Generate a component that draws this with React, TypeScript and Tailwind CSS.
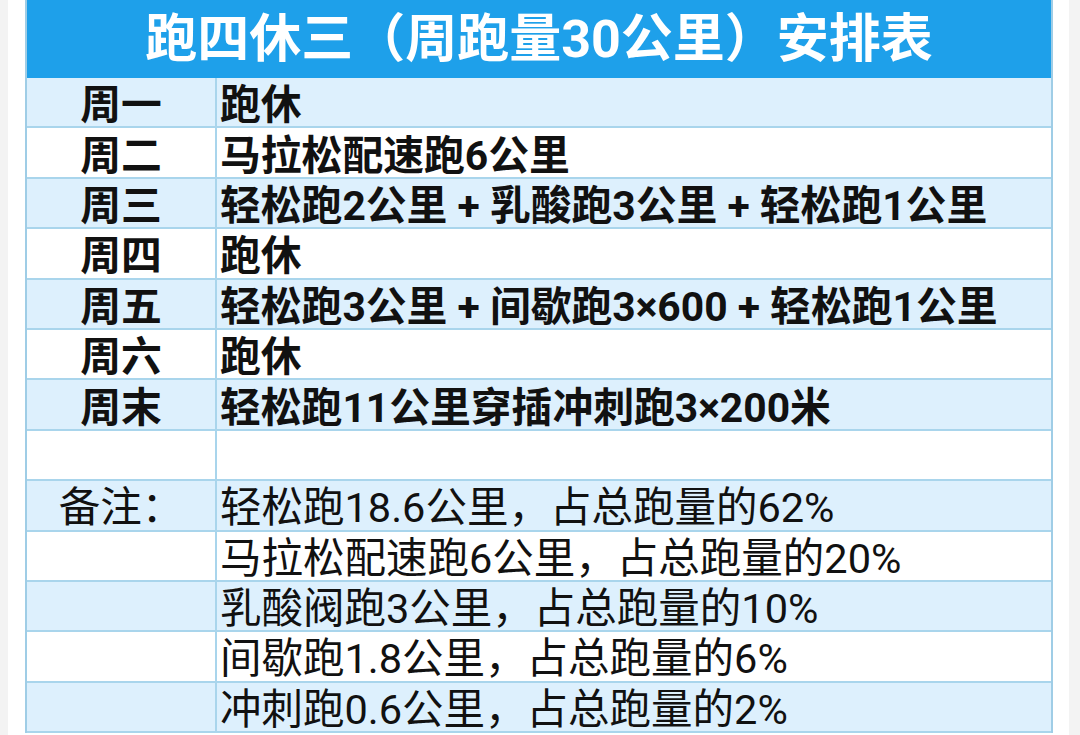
import React from 'react';

const FONT = { fontFamily: 'Roboto, "Noto Sans CJK SC", "Noto Sans", sans-serif' };

const plan = [
  ['周一', '跑休'],
  ['周二', '马拉松配速跑6公里'],
  ['周三', '轻松跑2公里 + 乳酸跑3公里 + 轻松跑1公里'],
  ['周四', '跑休'],
  ['周五', '轻松跑3公里 + 间歇跑3×600 + 轻松跑1公里'],
  ['周六', '跑休'],
  ['周末', '轻松跑11公里穿插冲刺跑3×200米'],
  ['', ''],
];

const notes = [
  ['备注：', '轻松跑18.6公里，占总跑量的62%'],
  ['', '马拉松配速跑6公里，占总跑量的20%'],
  ['', '乳酸阀跑3公里，占总跑量的10%'],
  ['', '间歇跑1.8公里，占总跑量的6%'],
  ['', '冲刺跑0.6公里，占总跑量的2%'],
];

function Row({ left, right, index, bold }: { left: string; right: string; index: number; bold: boolean }) {
  const bg = index % 2 === 0 ? 'bg-[#ddf0fd]' : 'bg-white';
  const size = bold ? 'text-[40.8px] font-bold' : 'text-[41.5px] font-normal';
  return (
    <div className={`flex h-[50.4px] border-b-2 border-[#a9d5ec] ${bg} text-[#111]`}>
      <div
        className={`w-[190px] shrink-0 border-r-2 border-[#a9d5ec] flex items-center justify-center pt-[6px] leading-[42px] ${size}`}
      >
        {left}
      </div>
      <div className={`flex-1 flex items-center pl-[3px] pt-[6px] whitespace-nowrap leading-[42px] ${size}`}>
        {right}
      </div>
    </div>
  );
}

export default function App() {
  return (
    <div className="w-[1080px] h-[735px] bg-[#f3f3f3] overflow-hidden" style={FONT}>
      <div className="ml-[8px] w-[1061px] h-full bg-white pl-[17px] pr-[16px]">
        <div className="border-x-2 border-[#9fcde6]">
          <div className="h-[78px] bg-[#1ea0ea] flex items-center justify-center text-white text-[52px] font-bold leading-none pt-[1px]">
            跑四休三（周跑量30公里）安排表
          </div>
          {plan.map(([l, r], i) => (
            <Row key={i} left={l} right={r} index={i} bold />
          ))}
          {notes.map(([l, r], i) => (
            <Row key={`n${i}`} left={l} right={r} index={i} bold={false} />
          ))}
        </div>
      </div>
    </div>
  );
}
